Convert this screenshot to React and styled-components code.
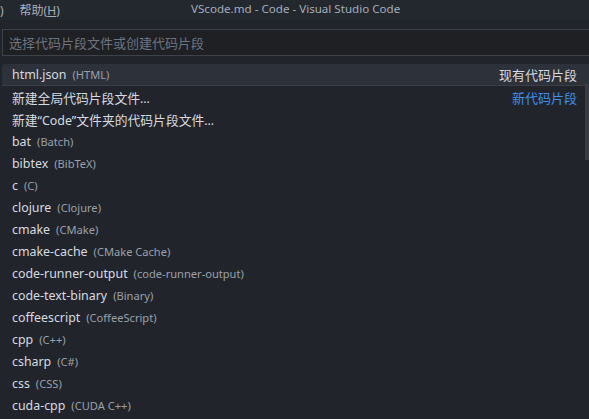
import React from "react";
import styled, { createGlobalStyle, css } from "styled-components";

const GlobalStyle = createGlobalStyle`
  html, body {
    margin: 0;
    padding: 0;
    background: #21252b;
  }
  body {
    font-family: "Segoe UI", "Noto Sans", "Noto Sans CJK SC", sans-serif;
    -webkit-font-smoothing: antialiased;
  }
`;

const Window = styled.div`
  width: 589px;
  height: 419px;
  overflow: hidden;
  display: flex;
  flex-direction: column;
  background: #21252b;
`;

const TitleBar = styled.div`
  height: 20px;
  flex: none;
  position: relative;
  display: flex;
  align-items: center;
  background: #23272e;
  color: #9da5b4;
  font-size: 12px;
`;

const MenuItem = styled.span`
  margin-left: ${props => props.gap || 0}px;
  color: #a9b0bd;
`;

const WindowTitle = styled.span`
  position: absolute;
  left: 191px;
  top: 0;
  line-height: 17px;
  font-size: 11.6px;
  color: #a5adba;
`;

const Picker = styled.div`
  flex: 1;
  display: flex;
  flex-direction: column;
  position: relative;
  padding-top: 9px;
`;

const InputBox = styled.div`
  margin: 0 -4px 0 2px;
  height: 25px;
  border: 1px solid #3d424b;
  background: #1e2024;
  display: flex;
  align-items: center;
  padding-left: 6px;
  color: #6e7480;
  font-size: 13px;
`;

const List = styled.div`
  margin-top: 8px;
  display: flex;
  flex-direction: column;
`;

const Row = styled.div`
  height: 22px;
  flex: none;
  display: flex;
  align-items: center;
  padding: 0 12px 0 12px;
  font-size: 12.4px;
  color: #d7dae0;
  ${props =>
    props.selected &&
    css`
      background: #2c313a;
      border-radius: 3px 0 0 0;
      margin-left: 2px;
      padding-left: 10px;
    `}
  ${props =>
    props.separator &&
    css`
      border-bottom: 1px solid #3a3f48;
      height: 21px;
    `}
`;

const Label = styled.span`
  white-space: nowrap;
`;

const Cjk = styled.span`
  font-size: 12.8px;
`;

const Desc = styled.span`
  margin-left: 6px;
  font-size: 11.1px;
  color: #9aa0aa;
  white-space: nowrap;
`;

const Side = styled.span`
  margin-left: auto;
  font-size: 13px;
  white-space: nowrap;
  color: ${props => (props.link ? "#3e8fef" : "#d7dae0")};
`;

const Scrollbar = styled.div`
  position: absolute;
  right: 0;
  top: 64px;
  width: 4px;
  height: 76px;
  background: #383c44;
`;

const languages = [
  ["bat", "Batch"],
  ["bibtex", "BibTeX"],
  ["c", "C"],
  ["clojure", "Clojure"],
  ["cmake", "CMake"],
  ["cmake-cache", "CMake Cache"],
  ["code-runner-output", "code-runner-output"],
  ["code-text-binary", "Binary"],
  ["coffeescript", "CoffeeScript"],
  ["cpp", "C++"],
  ["csharp", "C#"],
  ["css", "CSS"],
  ["cuda-cpp", "CUDA C++"],
];

export default function App() {
  return (
    <Window>
      <GlobalStyle />
      <TitleBar>
        <MenuItem>)</MenuItem>
        <MenuItem gap={16}>帮助(<u>H</u>)</MenuItem>
        <WindowTitle>VScode.md - Code - Visual Studio Code</WindowTitle>
      </TitleBar>
      <Picker>
        <InputBox>选择代码片段文件或创建代码片段</InputBox>
        <List>
          <Row selected separator>
            <Label>html.json</Label>
            <Desc>(HTML)</Desc>
            <Side>现有代码片段</Side>
          </Row>
          <Row>
            <Label><Cjk>新建全局代码片段文件</Cjk>…</Label>
            <Side link>新代码片段</Side>
          </Row>
          <Row>
            <Label><Cjk>新建</Cjk>“Code”<Cjk>文件夹的代码片段文件</Cjk>…</Label>
          </Row>
          {languages.map(([id, name]) => (
            <Row key={id}>
              <Label>{id}</Label>
              <Desc>({name})</Desc>
            </Row>
          ))}
        </List>
        <Scrollbar />
      </Picker>
    </Window>
  );
}
